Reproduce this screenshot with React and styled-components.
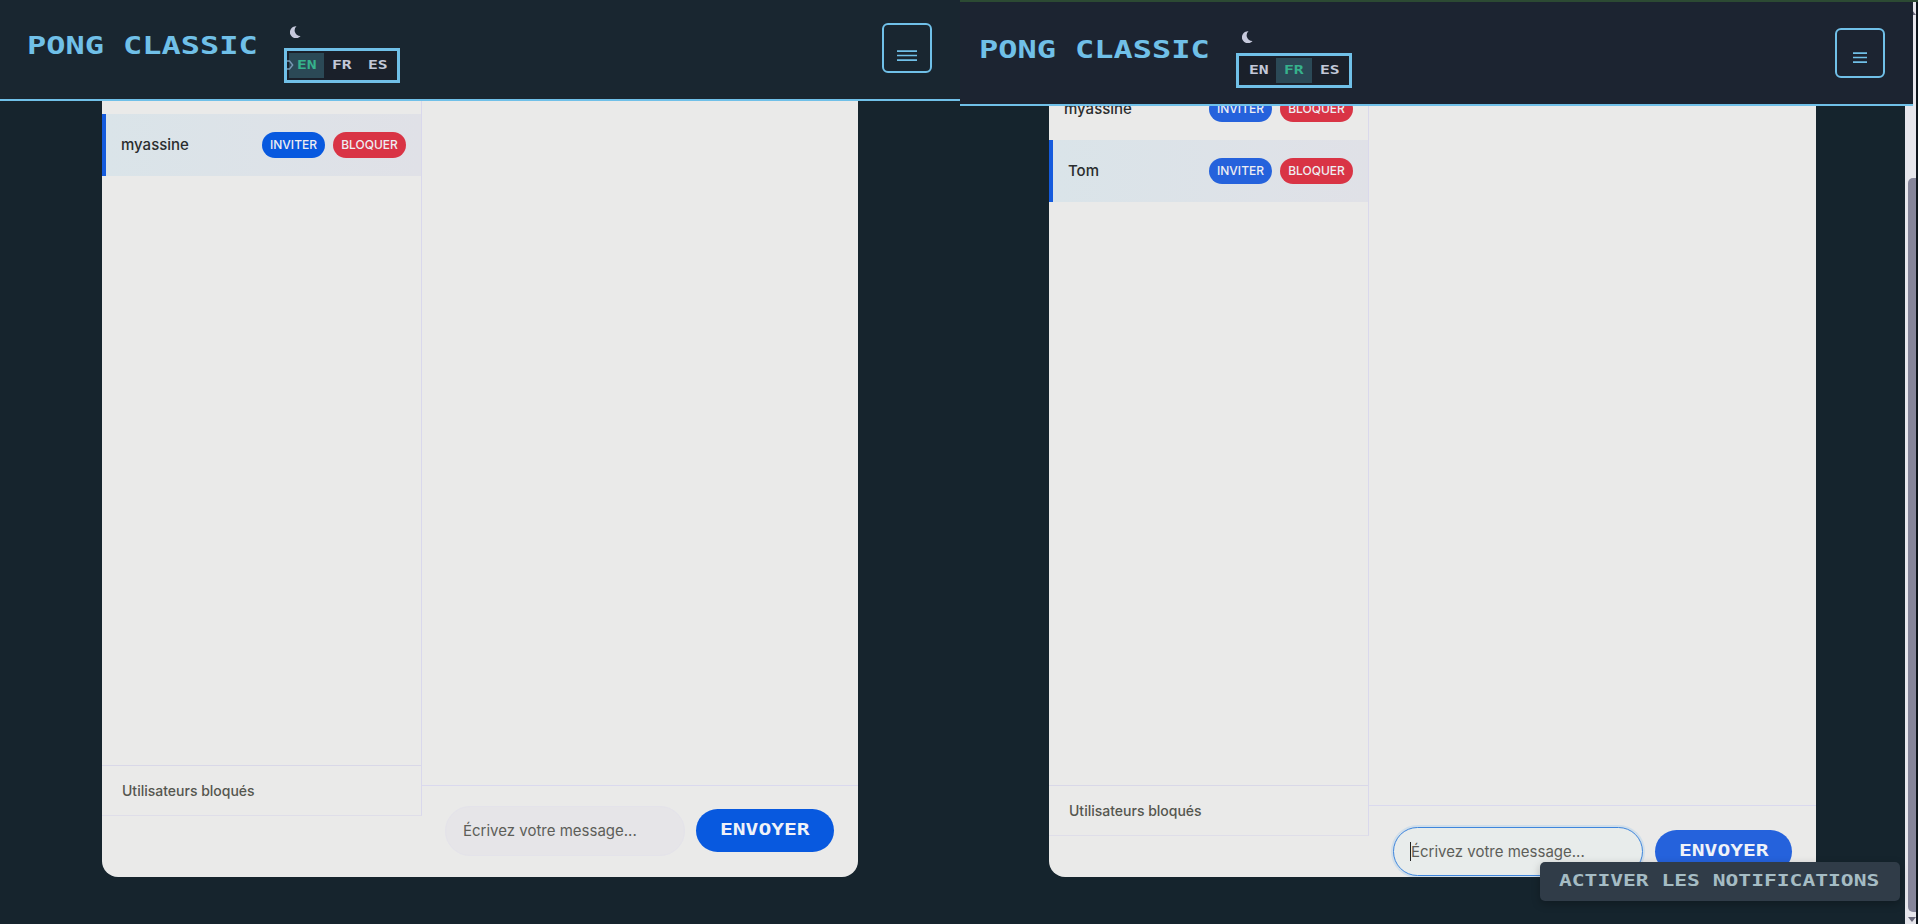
import React from "react";
import styled, { createGlobalStyle } from "styled-components";

const Global = createGlobalStyle`
  *, *::before, *::after { box-sizing: border-box; }
  body { margin: 0; background: #15242d; font-family: Inter, "Liberation Sans", sans-serif; overflow: hidden; }
  button { font: inherit; cursor: pointer; }
`;

const CYAN = "#70c0e8";

const Screen = styled.div`
  display: flex;
  width: 1918px;
  height: 924px;
  background: #15242d;
`;

const Pane = styled.section`
  position: relative;
  z-index: 0;
  display: flex;
  flex-direction: column;
  width: ${(p) => p.$width}px;
  height: 924px;
  overflow: hidden;
  background: ${(p) => p.$bg};
  border-top: ${(p) => p.$top}px solid #2c4a33;
`;

const Header = styled.header`
  display: flex;
  align-items: flex-start;
  flex: none;
  height: ${(p) => p.$height}px;
  padding: ${(p) => p.$padding};
  margin-right: ${(p) => p.$right || 0}px;
  background: ${(p) => p.$bg};
  border-bottom: 2px solid ${CYAN};
`;

/* Monospace lettering stretched to the proportions of an arcade face */
const ArcadeBox = styled.span`
  display: inline-block;
  width: ${(p) => p.$chars * 0.602 * p.$stretch}em;
  font-family: "DejaVu Sans Mono", monospace;
  font-weight: 700;
  font-size: ${(p) => p.$size}px;
  line-height: 1.2;
  text-align: left;
  white-space: nowrap;
`;
const ArcadeInner = styled.span`
  display: inline-block;
  transform: scaleX(${(p) => p.$stretch});
  transform-origin: left center;
`;
const Arcade = ({ children, size, stretch = 1.33 }) => (
  <ArcadeBox $chars={children.length} $size={size} $stretch={stretch}>
    <ArcadeInner $stretch={stretch}>{children}</ArcadeInner>
  </ArcadeBox>
);

const Brand = styled.div`
  display: flex;
  color: ${CYAN};
  margin-top: ${(p) => p.$top}px;
`;

const Settings = styled.div`
  display: flex;
  flex-direction: column;
  align-items: flex-start;
  margin-left: 26px;
  margin-top: ${(p) => p.$top}px;
  gap: 10px;
`;
const Moon = styled.svg`
  display: block;
  width: 11px;
  height: 12px;
  margin-left: 6px;
`;
const LangBox = styled.div`
  display: flex;
  align-items: center;
  position: relative;
  width: 116px;
  height: 35px;
  padding-left: 2px;
  background: #1a202a;
  border: 3px solid ${CYAN};
`;
const Lang = styled.button`
  display: flex;
  align-items: center;
  justify-content: center;
  width: 35.5px;
  height: 25px;
  padding: 0;
  border: 0;
  background: ${(p) => (p.$active ? "#2b4956" : "transparent")};
  color: ${(p) => (p.$active ? "#36b28c" : "#c3c8d8")};
`;
const Pointer = styled.svg`
  position: absolute;
  left: 0;
  top: 9px;
  width: 7px;
  height: 10px;
`;

const MenuButton = styled.button`
  display: flex;
  justify-content: center;
  width: 50px;
  height: 50px;
  margin-left: auto;
  margin-top: ${(p) => p.$top}px;
  padding: ${(p) => p.$inset}px 0 0;
  background: transparent;
  border: 2px solid ${CYAN};
  border-radius: 6px;
`;

const Content = styled.main`
  flex: 1;
  min-height: 0;
  overflow: hidden;
  padding: 0 ${(p) => p.$right}px 47px ${(p) => p.$left}px;
`;
const Panel = styled.div`
  display: flex;
  height: 100%;
  overflow: hidden;
  background: #eaeae9;
  border-radius: 0 0 16px 16px;
`;

const Sidebar = styled.aside`
  display: flex;
  flex-direction: column;
  flex: none;
  width: 320px;
  height: ${(p) => p.$height}px;
  border-right: 1px solid #d9d8ec;
  border-bottom: 1px solid #dfdee9;
`;
const Users = styled.div`
  flex: 1;
  min-height: 0;
  padding-top: ${(p) => p.$top || 0}px;
  margin-top: ${(p) => p.$shift || 0}px;
`;
const UserRow = styled.div`
  display: flex;
  align-items: center;
  height: 62px;
  gap: 8px;
  padding: 0 15px 1px;
  color: #2a2d2e;
  font-size: 15px;
  font-weight: 500;
  background: ${(p) => (p.$active ? "linear-gradient(90deg, #dae4e9, #e0e1e7)" : "transparent")};
  border-left: ${(p) => (p.$active ? 4 : 0)}px solid #155bdd;
`;
const Name = styled.span`
  flex: 1;
`;
const Pill = styled.button`
  width: ${(p) => p.$width}px;
  height: 26px;
  padding: 0;
  border: 0;
  border-radius: 13px;
  color: #eeeef2;
  font-size: 12px;
  line-height: 26px;
  background: ${(p) => p.$bg};
`;
const Blocked = styled.div`
  height: 50px;
  padding: 0 20px;
  border-top: 1px solid #d9d8e8;
  color: #55564f;
  font-size: 14px;
  font-weight: 500;
  line-height: 49px;
`;

const Chat = styled.div`
  display: flex;
  flex: 1;
  flex-direction: column;
  min-width: 0;
`;
const Messages = styled.div`
  flex: 1;
`;
const Composer = styled.form`
  display: flex;
  align-items: center;
  height: ${(p) => p.$height}px;
  padding: ${(p) => p.$padding};
  gap: ${(p) => p.$gap}px;
  border-top: 1px solid #dad9ee;
`;
const Field = styled.div`
  display: flex;
  align-items: center;
  flex: 1;
  height: ${(p) => (p.$focus ? 49 : 50)}px;
  padding-left: 17px;
  border-radius: 25px;
  border: 1px solid ${(p) => (p.$focus ? "#3f86dc" : "#e4e3ea")};
  background: ${(p) => (p.$focus ? "#e8eceb" : "#e6e5e8")};
  box-shadow: ${(p) => (p.$focus ? "0 0 0 2px rgba(120,180,235,.22)" : "none")};
  color: #5d5e59;
  font-size: 15px;
`;
const Caret = styled.span`
  width: 1px;
  height: 19px;
  margin-left: -1px;
  background: #222;
`;
const Send = styled.button`
  display: flex;
  align-items: center;
  justify-content: center;
  width: ${(p) => p.$width}px;
  height: 43px;
  padding: 0 0 2px;
  border: 0;
  border-radius: 22px;
  color: #f0f2f8;
  background: ${(p) => p.$bg};
`;

const Notify = styled.button`
  position: absolute;
  right: 18px;
  bottom: 23px;
  display: flex;
  align-items: center;
  justify-content: center;
  width: 360px;
  height: 39px;
  padding: 0 1px 2px 0;
  border: 0;
  border-radius: 5px;
  color: #a5bcc4;
  background: #303c48;
  box-shadow: 0 3px 8px rgba(0, 0, 0, 0.25);
`;

const ScrollTrack = styled.div`
  position: absolute;
  top: 0;
  right: 0;
  bottom: 0;
  z-index: -1;
  display: flex;
  flex-direction: column;
  align-items: flex-end;
  width: 13px;
  padding-top: 8px;
  background: #e6e6ec;
  border-right: 2px solid #0e151c;
`;
const ScrollThumb = styled.div`
  width: 8px;
  height: 734px;
  margin-top: 163px;
  background: #85859a;
  border-radius: 5px 0 0 5px;
`;
const ScrollArrow = styled.svg`
  width: 8px;
  height: 5px;
  margin-top: ${(p) => p.$gap}px;
`;

const MoonIcon = () => (
  <Moon viewBox="0 0 11 12">
    <path d="M6.5.3A6 6 0 1 0 10.6 10 5.6 5.6 0 0 1 6.5.3Z" fill="#c6c9dc" />
  </Moon>
);

const Bars = ({ width }) => (
  <svg width={width} height="14" viewBox="0 0 20 14" preserveAspectRatio="none">
    <path d="M0 2.2H20M0 6.5H20M0 11.2H20" stroke={CYAN} strokeWidth="1.7" />
  </svg>
);

const Languages = ({ active, pointer }) => (
  <LangBox>
    {["EN", "FR", "ES"].map((l) => (
      <Lang key={l} $active={l === active}>
        <Arcade size={11.5} stretch={1.42}>{l}</Arcade>
      </Lang>
    ))}
    {pointer && (
      <Pointer viewBox="0 0 7 10">
        <path d="M0 1H2.5L5.7 5 2.5 9H0" fill="none" stroke="#7898b4" strokeWidth="1.4" />
      </Pointer>
    )}
  </LangBox>
);

const User = ({ name, active, blue }) => (
  <UserRow $active={active}>
    <Name>{name}</Name>
    <Pill $width={63} $bg={blue}>INVITER</Pill>
    <Pill $width={73} $bg="#d93445">BLOQUER</Pill>
  </UserRow>
);

export default function App() {
  return (
    <Screen>
      <Global />
      <Pane $width={960} $top={0} $bg="#16242d">
        <Header $height={101} $padding="0 28px 0 27px" $bg="#192630">
          <Brand $top={32}><Arcade size={24}>PONG CLASSIC</Arcade></Brand>
          <Settings $top={26}>
            <MoonIcon />
            <Languages active="EN" pointer />
          </Settings>
          <MenuButton $top={23} $inset={24}><Bars width={20} /></MenuButton>
        </Header>
        <Content $left={102} $right={102}>
          <Panel>
            <Sidebar $height={715}>
              <Users $top={13}>
                <User name="myassine" active blue="#0859df" />
              </Users>
              <Blocked>Utilisateurs bloqués</Blocked>
            </Sidebar>
            <Chat>
              <Messages />
              <Composer $height={92} $padding="0 24px 2px 23px" $gap={11} onSubmit={(e) => e.preventDefault()}>
                <Field>Écrivez votre message...</Field>
                <Send $width={138} $bg="#0859df"><Arcade size={16}>ENVOYER</Arcade></Send>
              </Composer>
            </Chat>
          </Panel>
        </Content>
      </Pane>

      <Pane $width={958} $top={2} $bg="transparent">
        <Header $height={104} $padding="0 28px 0 19px" $right={5} $bg="#1c2431">
          <Brand $top={34}><Arcade size={24}>PONG CLASSIC</Arcade></Brand>
          <Settings $top={29}>
            <MoonIcon />
            <Languages active="FR" />
          </Settings>
          <MenuButton $top={26} $inset={21}><Bars width={14} /></MenuButton>
        </Header>
        <Content $left={89} $right={102}>
          <Panel>
            <Sidebar $height={730}>
              <Users $shift={-28}>
                <User name="myassine" blue="#2562dc" />
                <User name="Tom" active blue="#2562dc" />
              </Users>
              <Blocked>Utilisateurs bloqués</Blocked>
            </Sidebar>
            <Chat>
              <Messages />
              <Composer $height={72} $padding="21px 24px 1px 24px" $gap={12} onSubmit={(e) => e.preventDefault()}>
                <Field $focus><Caret />Écrivez votre message...</Field>
                <Send $width={137} $bg="#2562dc"><Arcade size={16}>ENVOYER</Arcade></Send>
              </Composer>
            </Chat>
          </Panel>
        </Content>
        <ScrollTrack>
          <ScrollArrow $gap={0} viewBox="0 0 8 5"><path d="M0 5H8L4 0Z" fill="#67677a" /></ScrollArrow>
          <ScrollThumb />
          <ScrollArrow $gap={5} viewBox="0 0 8 5"><path d="M0 0H8L4 5Z" fill="#67677a" /></ScrollArrow>
        </ScrollTrack>
        <Notify><Arcade size={16}>ACTIVER LES NOTIFICATIONS</Arcade></Notify>
      </Pane>
    </Screen>
  );
}
